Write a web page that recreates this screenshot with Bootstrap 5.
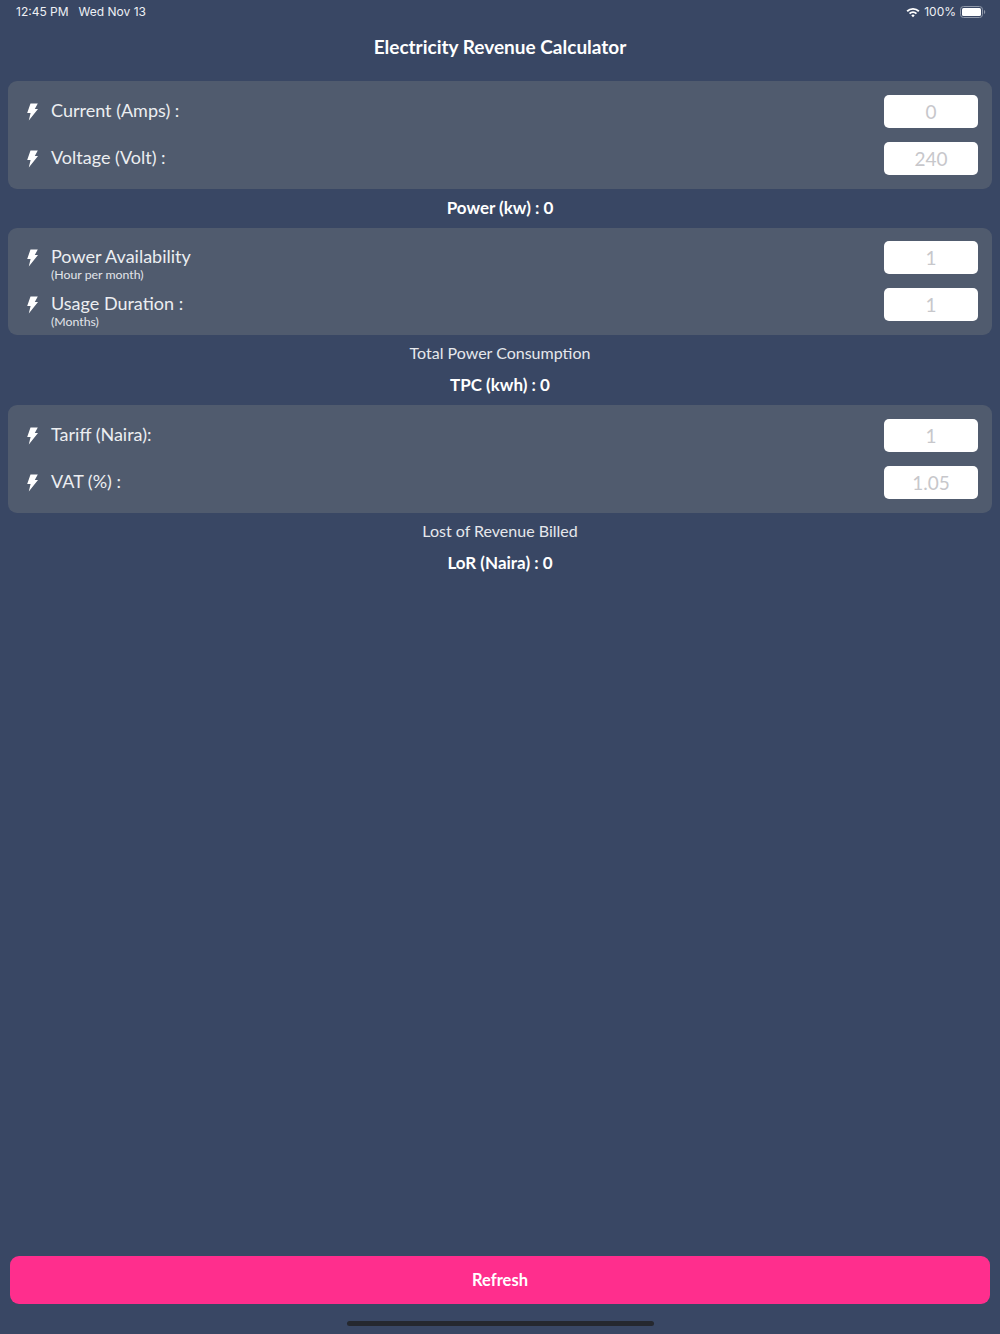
<!DOCTYPE html>
<html lang="en">
<head>
    <meta charset="UTF-8">
    <title>Electricity Revenue Calculator</title>
    <link href="https://cdn.jsdelivr.net/npm/bootstrap@5.3.3/dist/css/bootstrap.min.css" rel="stylesheet">
    <style>
        html, body { height: 1334px; overflow: hidden; }
        body { background: #394764; color: #fff; font-family: "Lato", "Noto Sans", sans-serif; }
        .screen { height: 1334px; }
        .status-row { height: 24px; padding: 0 14px 0 16px; font: 12px/24px "Inter", "Liberation Sans", sans-serif; color: #eef0f4; }
        .date-text { margin-left: 10px; }
        .app-title { height: 46px; margin-bottom: 11px; font-size: 19px; font-weight: 700; line-height: 46px; }
        .calc-panel { height: 108px; margin: 0 8px; padding: 7px 14px 0 17px; background: #505b6e; border-radius: 9px; }
        .calc-panel.short-panel { height: 107px; padding-top: 6px; }
        .calc-row { height: 47px; }
        .bolt { width: 16px; height: 18px; margin-right: 10px; flex: none; }
        .row-text { margin-top: -4px; font-size: 18px; line-height: 24px; color: #eceef1; white-space: nowrap; }
        .row-text small { display: block; height: 0; font-size: 12.3px; line-height: 13px; color: #e2e5ea; }
        .calc-input { width: 94px; height: 33px; border: 0; border-radius: 5px; padding: 0; background: #fff; text-align: center; font-size: 19px; font-family: "Lato", sans-serif; box-shadow: none; }
        .calc-input::placeholder { color: #c7c7cb; opacity: 1; }
        .result-line { height: 39px; line-height: 36px; font-size: 16px; text-align: center; color: #e6e8ec; }
        .result-strong { line-height: 37px; font-size: 17px; font-weight: 700; color: #fff; }
        .result-strong.tight { height: 31px; line-height: 22px; }
        .refresh-btn { margin: 0 10px; width: 980px; height: 48px; border: 0; border-radius: 9px; background: #ff2e8d; color: #fff; font-size: 16.5px; font-weight: 700; }
        .refresh-btn:hover { background: #ff2e8d; color: #fff; }
        .home-bar { width: 307px; height: 5px; margin: 17px auto 8px; border-radius: 3px; background: #25282f; }
    </style>
</head>
<body>
    <div class="screen d-flex flex-column">
        <!-- status bar -->
        <div class="status-row d-flex align-items-center">
            <span>12:45 PM</span>
            <span class="date-text">Wed Nov 13</span>
            <svg class="ms-auto" width="14" height="11" viewBox="0 0 14 11">
                <path d="M0.500 3.600A9.200 9.200 0 0 1 13.500 3.600L12.200 4.900A7.400 7.400 0 0 0 1.800 4.900Z" fill="#fff"/>
                <path d="M2.900 6A5.800 5.800 0 0 1 11.100 6L9.800 7.300A4 4 0 0 0 4.200 7.300Z" fill="#fff"/>
                <path d="M5.300 8.400A2.400 2.400 0 0 1 8.700 8.400L7 10.300Z" fill="#fff"/>
            </svg>
            <span class="ms-1">100%</span>
            <svg class="ms-1" width="26" height="12" viewBox="0 0 26 12">
                <rect x="0.500" y="0.500" width="22" height="11" rx="3" fill="none" stroke="#8f98a9"/>
                <rect x="2" y="2" width="19" height="8" rx="1.500" fill="#fff"/>
                <path d="M24 4v4c.8-.3 1.200-1 1.200-2s-.4-1.700-1.200-2Z" fill="#8f98a9"/>
            </svg>
        </div>

        <div class="app-title text-center">Electricity Revenue Calculator</div>

        <!-- amps and volts -->
        <div class="calc-panel">
            <div class="calc-row d-flex align-items-center">
                <svg class="bolt" viewBox="0 0 16 18"><path d="M5.500 0.500H12.800L9.800 6H13L3.800 17.500L5.600 10H2.200Z" fill="#fff"/></svg>
                <div class="row-text">Current (Amps) :</div>
                <input class="form-control calc-input ms-auto" placeholder="0">
            </div>
            <div class="calc-row d-flex align-items-center">
                <svg class="bolt" viewBox="0 0 16 18"><path d="M5.500 0.500H12.800L9.800 6H13L3.800 17.500L5.600 10H2.200Z" fill="#fff"/></svg>
                <div class="row-text">Voltage (Volt) :</div>
                <input class="form-control calc-input ms-auto" placeholder="240">
            </div>
        </div>
        <div class="result-line result-strong">Power (kw) : 0</div>

        <!-- availability and duration -->
        <div class="calc-panel short-panel">
            <div class="calc-row d-flex align-items-center">
                <svg class="bolt" viewBox="0 0 16 18"><path d="M5.500 0.500H12.800L9.800 6H13L3.800 17.500L5.600 10H2.200Z" fill="#fff"/></svg>
                <div class="row-text">Power Availability<small>(Hour per month)</small></div>
                <input class="form-control calc-input ms-auto" placeholder="1">
            </div>
            <div class="calc-row d-flex align-items-center">
                <svg class="bolt" viewBox="0 0 16 18"><path d="M5.500 0.500H12.800L9.800 6H13L3.800 17.500L5.600 10H2.200Z" fill="#fff"/></svg>
                <div class="row-text">Usage Duration :<small>(Months)</small></div>
                <input class="form-control calc-input ms-auto" placeholder="1">
            </div>
        </div>
        <div class="result-line">Total Power Consumption</div>
        <div class="result-line result-strong tight">TPC (kwh) : 0</div>

        <!-- tariff and vat -->
        <div class="calc-panel">
            <div class="calc-row d-flex align-items-center">
                <svg class="bolt" viewBox="0 0 16 18"><path d="M5.500 0.500H12.800L9.800 6H13L3.800 17.500L5.600 10H2.200Z" fill="#fff"/></svg>
                <div class="row-text">Tariff (Naira):</div>
                <input class="form-control calc-input ms-auto" placeholder="1">
            </div>
            <div class="calc-row d-flex align-items-center">
                <svg class="bolt" viewBox="0 0 16 18"><path d="M5.500 0.500H12.800L9.800 6H13L3.800 17.500L5.600 10H2.200Z" fill="#fff"/></svg>
                <div class="row-text">VAT (%) :</div>
                <input class="form-control calc-input ms-auto" placeholder="1.05">
            </div>
        </div>
        <div class="result-line">Lost of Revenue Billed</div>
        <div class="result-line result-strong tight">LoR (Naira) : 0</div>

        <button class="btn refresh-btn mt-auto" type="button">Refresh</button>
        <div class="home-bar"></div>
    </div>
    <script src="https://cdn.jsdelivr.net/npm/bootstrap@5.3.3/dist/js/bootstrap.bundle.min.js"></script>
</body>
</html>
